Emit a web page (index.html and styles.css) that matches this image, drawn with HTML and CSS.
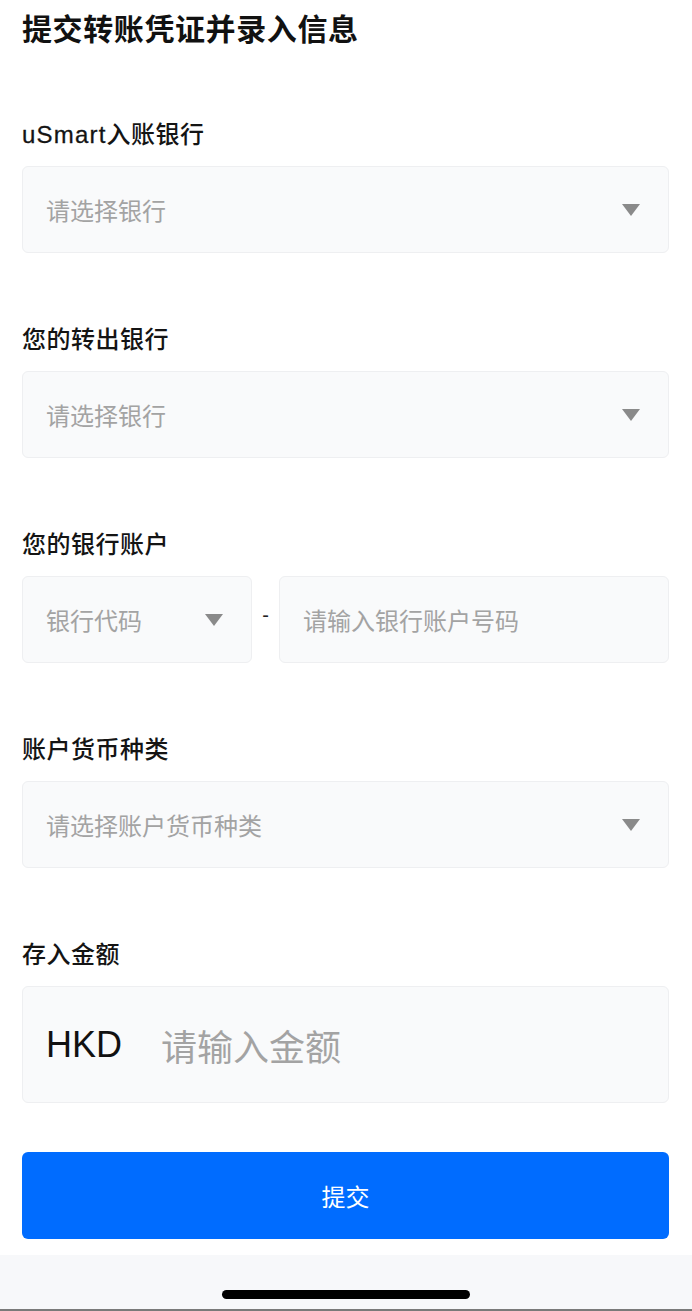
FILE: index.html
```html
<!DOCTYPE html>
<html lang="zh-CN">
<head>
<meta charset="utf-8">
<title>提交转账凭证并录入信息</title>
<link rel="stylesheet" href="styles.css">
</head>
<body>
<div class="page">
  <h1 class="title">提交转账凭证并录入信息</h1>

  <div class="field first">
    <div class="label"><span class="brand">uSmart</span>入账银行</div>
    <div class="box select">
      <span class="ph">请选择银行</span>
      <span class="arrow"></span>
    </div>
  </div>

  <div class="field">
    <div class="label">您的转出银行</div>
    <div class="box select">
      <span class="ph">请选择银行</span>
      <span class="arrow"></span>
    </div>
  </div>

  <div class="field">
    <div class="label">您的银行账户</div>
    <div class="row">
      <div class="box select code">
        <span class="ph">银行代码</span>
        <span class="arrow"></span>
      </div>
      <span class="dash">-</span>
      <div class="box account">
        <span class="ph">请输入银行账户号码</span>
      </div>
    </div>
  </div>

  <div class="field">
    <div class="label">账户货币种类</div>
    <div class="box select">
      <span class="ph">请选择账户货币种类</span>
      <span class="arrow"></span>
    </div>
  </div>

  <div class="field">
    <div class="label">存入金额</div>
    <div class="box amount">
      <span class="cur">HKD</span>
      <span class="ph big">请输入金额</span>
    </div>
  </div>

  <button class="submit" type="button">提交</button>
</div>
<div class="homebar">
  <div class="indicator"></div>
</div>
</body>
</html>
```

FILE: styles.css
```css
* { box-sizing: border-box; }
html, body {
  margin: 0;
  padding: 0;
  background: #ffffff;
}
body {
  font-family: "Liberation Sans", "Noto Sans CJK SC", sans-serif;
  color: #1a1a1a;
  width: 692px;
  height: 1311px;
  display: flex;
  flex-direction: column;
}
.page {
  padding: 10px 23px 0 22px;
  flex: 1;
}
.title {
  margin: 0;
  font-size: 30px;
  line-height: 40px;
  font-weight: 600;
  color: #111111;
  letter-spacing: 0.6px;
}
.field {
  margin-top: 72px;
}
.field.first {
  margin-top: 70px;
}
.label {
  font-size: 24px;
  line-height: 30px;
  font-weight: 500;
  color: #141414;
  letter-spacing: 0.5px;
  margin-bottom: 16px;
}
.brand {
  letter-spacing: 1.2px;
  -webkit-text-stroke: 0.3px #141414;
}
.box {
  height: 87px;
  background: #f9fafb;
  border: 1px solid #eeeff1;
  border-radius: 6px;
  display: flex;
  align-items: center;
  padding: 0 22px 0 23px;
}
.ph {
  font-size: 24px;
  color: #a3a3a3;
  flex: 1;
}
.arrow {
  width: 0;
  height: 0;
  border-left: 9px solid transparent;
  border-right: 9px solid transparent;
  border-top: 12px solid #8a8a8a;
  margin-right: 6px;
}
.row {
  display: flex;
  align-items: center;
}
.code {
  width: 230px;
  flex: none;
}
.dash {
  width: 27px;
  text-align: center;
  font-size: 20px;
  color: #222;
  margin-top: -8px;
}
.account {
  flex: 1;
}
.amount {
  height: 117px;
}
.cur {
  font-size: 36px;
  color: #111111;
  margin-right: 39px;
}
.ph.big {
  font-size: 36px;
}
.submit {
  display: block;
  width: 100%;
  height: 87px;
  margin-top: 49px;
  border: none;
  border-radius: 6px;
  background: #006cff;
  color: #ffffff;
  font-family: "Liberation Sans", "Noto Sans CJK SC", sans-serif;
  font-size: 24px;
  padding: 0;
}
.homebar {
  height: 56px;
  background: #f7f8fa;
  border-bottom: 2px solid #7a7a7a;
  display: flex;
  justify-content: center;
  padding-top: 35px;
}
.indicator {
  width: 248px;
  height: 9px;
  border-radius: 5px;
  background: #000000;
}
```
